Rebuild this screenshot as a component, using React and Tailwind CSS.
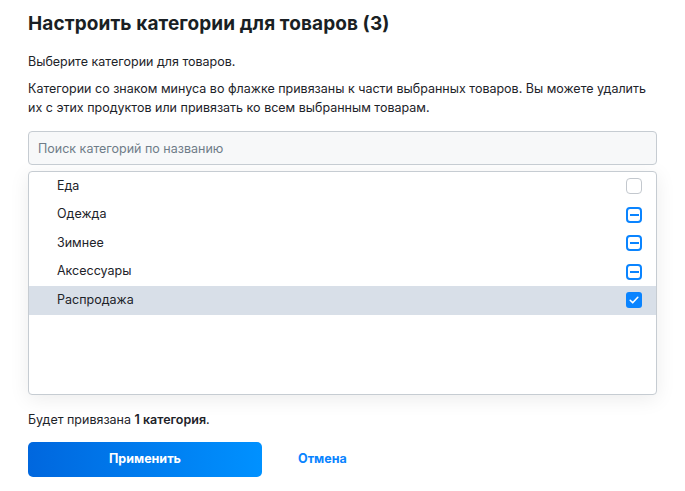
import React, { useState } from 'react';

const categories = [
  { name: 'Еда', state: 'off' },
  { name: 'Одежда', state: 'partial' },
  { name: 'Зимнее', state: 'partial' },
  { name: 'Аксессуары', state: 'partial' },
  { name: 'Распродажа', state: 'on' },
];

// Checkbox drawn in three states: empty, partial (minus), checked
function Box({ state }) {
  if (state === 'on') {
    return (
      <span className="flex h-[16px] w-[16px] items-center justify-center rounded-[3px] bg-[#0a84ff]">
        <svg width="12" height="12" viewBox="0 0 12 12" fill="none">
          <path d="M2.2 6.3l2.5 2.5L9.8 3.3" stroke="white" strokeWidth="1.6" strokeLinecap="round" strokeLinejoin="round" />
        </svg>
      </span>
    );
  }
  if (state === 'partial') {
    return (
      <span className="flex h-[16px] w-[16px] items-center justify-center rounded-[4px] border-2 border-[#0a84ff] bg-white">
        <span className="h-[2px] w-[9px] bg-[#0a84ff]" />
      </span>
    );
  }
  return <span className="h-[16px] w-[16px] rounded-[4px] border-[1.5px] border-[#c3c8ce] bg-white" />;
}

export default function App() {
  const [query, setQuery] = useState('');

  return (
    <div className="min-h-screen bg-white px-[28px] pt-[12px] text-[#1d2329]" style={{ fontFamily: 'Inter, "Noto Sans", sans-serif' }}>
      <h1 className="text-[19px] font-bold leading-[24px] tracking-[0.1px] text-[#1a1f24]">Настроить категории для товаров (3)</h1>

      <p className="mt-[16px] text-[12.5px] leading-[19px]">Выберите категории для товаров.</p>
      <p className="mt-[8px] text-[12.5px] leading-[19px]">
        Категории со знаком минуса во флажке привязаны к части выбранных товаров. Вы можете удалить их с этих продуктов или привязать ко всем выбранным товарам.
      </p>

      <input
        value={query}
        onChange={(e) => setQuery(e.target.value)}
        placeholder="Поиск категорий по названию"
        className="mt-[14px] h-[34px] w-full rounded-[4px] border border-[#c6ccd2] bg-[#f7f8f9] px-[9px] text-[12.5px] outline-none placeholder:text-[#6f7c88]"
      />

      <div className="mt-[6px] h-[224px] w-full overflow-hidden rounded-[4px] border border-[#c6ccd2] bg-white shadow-[0_4px_20px_rgba(0,0,0,0.08)]">
        {categories.map((c) => (
          <div
            key={c.name}
            className={`flex h-[28.5px] items-center justify-between pl-[28px] pr-[14px] text-[12.5px] ${c.state === 'on' ? 'bg-[#d8dfe8]' : ''}`}
          >
            <span>{c.name}</span>
            <Box state={c.state} />
          </div>
        ))}
      </div>

      <p className="mt-[15px] text-[12.5px] leading-[19px]">
        Будет привязана <b className="font-semibold">1 категория</b>.
      </p>

      <div className="mt-[13px] flex items-center">
        <button className="h-[35px] w-[234px] rounded-[5px] bg-gradient-to-r from-[#0067de] to-[#0091ff] text-[12.5px] font-bold text-white">
          Применить
        </button>
        <button className="ml-[36px] text-[12.5px] font-bold text-[#0a84ff]">Отмена</button>
      </div>
    </div>
  );
}
